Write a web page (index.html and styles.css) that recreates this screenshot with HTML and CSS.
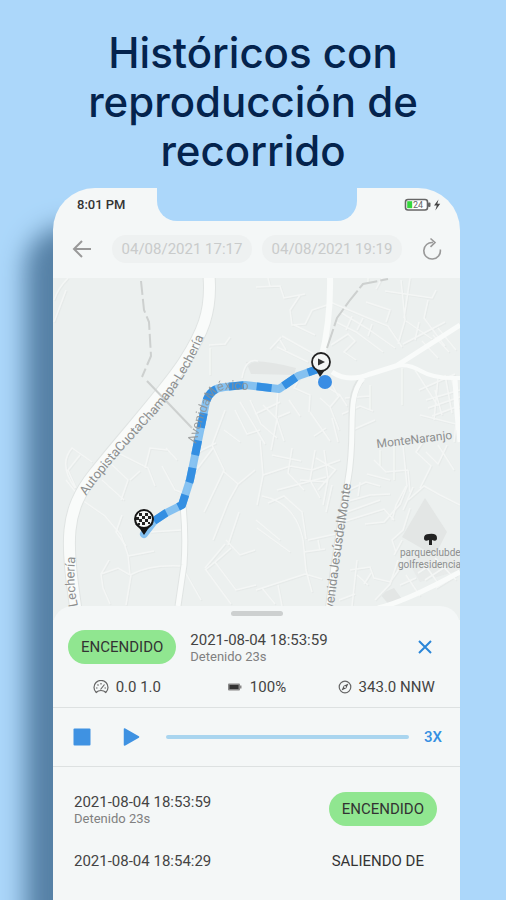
FILE: index.html
```html
<!DOCTYPE html>
<html lang="es">

<head>
    <meta charset="UTF-8">
    <meta name="viewport" content="width=device-width, initial-scale=1.0">
    <title>Históricos con reproducción de recorrido</title>
    <link rel="stylesheet" href="styles.css">
</head>

<body>

    <h1>Históricos con<br>reproducción de<br>recorrido</h1>

    <main class="phone">
        <div class="status-bar">
            <span class="time">8:01 PM</span>
            <div class="notch"></div>
            <div class="battery">
                <svg width="38" height="14" viewBox="0 0 38 14" role="img" aria-label="24%">
                    <rect x="1.5" y="1.5" width="22" height="10.5" rx="2.5" fill="#fff" stroke="#666" stroke-width="1.6" />
                    <rect x="24" y="4.5" width="2.5" height="4.5" rx="1" fill="#666" />
                    <rect x="3.2" y="3.2" width="5" height="7" fill="#35d63c" />
                    <text x="9" y="10" class="battery-text">24</text>
                    <path d="M34.500 1.500 L30 7.500 H32.800 L31.300 12.500 L36.200 5.800 H33.300 Z" fill="#444" />
                </svg>
            </div>
        </div>

        <header class="toolbar">
            <button class="icon-btn" aria-label="Regresar">
                <svg width="20" height="20" viewBox="0 0 20 20" fill="none" stroke="#999" stroke-width="2">
                    <path d="M19 10H2.500M10 2L2 10l8 8" />
                </svg>
            </button>
            <div class="dates">
                <button class="date">04/08/2021 17:17</button>
                <button class="date">04/08/2021 19:19</button>
            </div>
            <button class="icon-btn" aria-label="Actualizar">
                <svg width="20" height="24" viewBox="0 0 20 24" fill="none" stroke="#999" stroke-width="1.600">
                    <path d="M11 5.500A8.300 8.300 0 1 0 18.300 12.500M8.500 1.500l4.500 4-4.500 4.300" />
                </svg>
            </button>
        </header>

        <div class="map">
            <svg viewBox="53 278 407 342" preserveAspectRatio="xMidYMin slice">
                <defs>
                    <path id="autopista" d="M86 496C104 470 128 444 152 418S194 364 208 326" />
                    <path id="lecheria" d="M78 606C74 588 73 570 77 546" />
                    <path id="avenida" d="M196 444C201 425 207 405 214 396S228 390 262 390" />
                    <path id="jesus" d="M333 618C337 570 345 530 353 470" />
                    <path id="naranjo" d="M377 448L460 438" />
                </defs>

                <!-- green areas -->
                <g fill="#e3e6e5">
                    <path d="M425 498L447 532 435 556 402 537Z" />
                    <path d="M246 362Q262 359 296 368L294 375 251 374Z" />
                    <path d="M380 594L394 588 404 602 390 606Z" />
                    <path d="M405 556L460 553V570L420 582Z" opacity=".5" />
                </g>

                <!-- small streets -->
                <g class="streets">
                    <path d="M54 300Q58 288 68 278M54 322L66 290M80 455L68 470 76 488M66 480L82 500 105 516 121 535 128 555 130 575M75 488Q58 464 72 448L92 462" />
                    <path d="M130 575L118 568 101 574 103 588 110 604M130 575Q150 564 182 566M128 556L154 551M131 575L126 605M101 574L109 560M150 532L181 530M122 515L116 532 126 546" />
                    <path d="M209 345L225 344 230 337M210 348V375M242 378Q245 358 258 361M225 410L212 445 224 470 204 512M213 448L190 478M224 430L240 442M216 443L198 452" />
                    <path d="M235 410L247 434 260 430M250 400L261 424 277 438M240 402L265 444M263 405L277 419 271 450M223 471L238 484 228 502 213 540M238 484L255 470" />
                    <path d="M110 463L128 480 121 500M118 453L148 468 155 486M130 480L140 471M102 480L124 500M145 468L150 448 167 450M162 466L175 490 188 495M166 448L177 460" />
                    <path d="M205 570L215 562 236 590 256 585M226 540L240 555 255 550M206 570L231 604M225 544L205 568M215 562L231 548M239 512L228 545M184 570L201 600" />
                    <path d="M270 286L268 278M256 287L280 286 284 298 305 294M300 295L290 310 292 325 305 324 312 310 327 305M294 325L315 335M281 337L270 349M277 347L308 362M282 336L314 354M286 350L280 340" />
                    <path d="M330 302L368 318 388 326 402 347M340 312L368 329 395 348M352 316L346 330M363 318L357 330M372 324L368 336M336 322L356 332 383 352M331 345L348 334 355 341 344 352 356 360M366 302L390 310 386 322M401 280L405 320 398 344M368 282V278M410 278L404 318" />
                    <path d="M385 291L432 298 436 290M376 289L382 278M428 300L424 318 445 346M406 321L432 339M419 322L415 340M422 341L438 358M433 335L449 352M438 328L456 350M403 344L445 322" />
                    <path d="M402 368V405M415 370L438 406M438 378L434 420M426 400L460 390M428 408L460 397M432 416L456 407M419 390L455 374M445 375L452 413M451 376L459 408M435 390L442 415M420 415L456 424 454 442" />
                    <path d="M300 377L294 388 310 395 309 412M316 380L340 395 347 406M340 395L330 407 339 430M330 407L320 398M338 396L332 384M342 414L360 406 373 411M345 398L370 396M370 385V410" />
                    <path d="M278 388L276 417 284 441M278 417L290 412M280 402L255 414M332 418L338 442M326 428L314 436M310 412L330 441M289 400L300 416M352 430L375 420" />
                    <path d="M260 440L263 475 257 505M263 475L290 466 312 470 340 460M272 455L301 461M292 448L288 473 304 490M315 450L310 480 320 498M277 490L326 477M268 503L284 496 302 512 306 539M262 496Q296 503 303 540" />
                    <path d="M324 450L328 478 323 505M316 458L336 470M332 485L326 512M300 480L328 482M335 470L318 490M348 490L366 482 380 486M345 502L370 495 390 494M344 513L380 500M342 522L384 509 394 520M360 482L358 496" />
                    <path d="M374 460L386 472 408 470M367 474L390 480M394 446V480M403 446L407 486 400 504 384 522 365 524M408 470L410 492M424 440L416 452 431 466 420 488M408 500L424 486 440 495 460 505M447 445L438 464 426 452M380 450V466" />
                    <path d="M406 486L396 505 392 520M413 487L403 510M410 508L403 530 392 540 396 552M402 540L394 555M438 445L454 470" />
                    <path d="M256 520L280 540M257 528L290 552M303 540L306 570 312 592M308 540L340 533M304 552L325 549M256 590L305 574 322 579M318 540L320 550M350 570L370 567 374 578 390 582 402 565M357 560L352 606M357 575L368 585" />
                    <path d="M371 573L364 584M375 600L390 584 398 560M406 575L420 596M423 562L440 586M435 558L456 580M418 573L438 560M425 580L448 565M436 588L457 575M400 585L416 578M339 600L355 594M278 585L282 606M262 588L275 604" />
                </g>

                <!-- main roads -->
                <g class="road-edge">
                    <path d="M209 276C212 312 202 334 184 362S124 436 94 474 66 540 76 610" stroke-width="13" />
                    <path d="M183 505Q186 535 184 565L178 606" stroke-width="7" />
                    <path d="M361 380C345 400 357 430 348 480S334 560 328 612" stroke-width="7" />
                </g>
                <g class="road">
                    <path d="M209 276C212 312 202 334 184 362S124 436 94 474 66 540 76 610" stroke-width="11" />
                    <path d="M330 276Q331 320 321 360" stroke-width="6" />
                    <path d="M332 372Q348 383 370 374L396 366 460 325" stroke-width="5" />
                    <path d="M396 366Q408 363 421 371T460 378" stroke-width="4" />
                    <path d="M363 378C345 400 357 430 348 480S334 560 328 612" stroke-width="5" />
                    <path d="M183 505Q186 535 184 565L178 606" stroke-width="5" />
                    <path d="M208 400L183 505" stroke-width="4" />
                    <path d="M378 608Q405 602 460 572M455 378Q457 420 460 442" stroke-width="5" />
                </g>
                <g class="boundary">
                    <path d="M141 281L144 310 149 322 151 356 142 377" stroke-dasharray="14 4" />
                    <path d="M147 381L192 428" />
                    <path d="M327 348L337 318 350 300 363 284 388 279" stroke-dasharray="20 3" />
                </g>

                <g class="map-text">
                    <text><textPath href="#autopista">AutopistaCuotaChamapa-Lechería</textPath></text>
                    <text><textPath href="#lecheria">Lechería</textPath></text>
                    <text><textPath href="#jesus">AvenidaJesúsdelMonte</textPath></text>
                    <text class="town"><textPath href="#naranjo">MonteNaranjo</textPath></text>
                    <text class="park" x="400" y="556">parqueclubde</text>
                    <text class="park" x="398" y="568">golfresidencia</text>
                </g>
                <path d="M429 540q-5 2-5-2 0-4 5-4 8-1 8 4 0 4-5 2v5h-3z" fill="#222" />

                <!-- travelled route -->
                <g class="route">
                    <path class="route-base" d="M144 534L154 521 166 513 182 505 190 480 206 402Q210 388 225 387L245 385 279 389 298 376 318 369" />
                    <path class="route-dash" d="M154 521L166 513 182 505 190 480 206 402Q210 388 225 387L245 385 279 389 298 376 318 369" />
                </g>
                <text class="map-text street-name"><textPath href="#avenida">AvenidaMéxico</textPath></text>
                <circle cx="325" cy="382" r="7" fill="#3a8de4" />

                <!-- start and finish markers -->
                <path d="M316 370L320 377 325 370Z" fill="#222" />
                <circle cx="321" cy="362" r="9" fill="#f5f7f6" stroke="#222" stroke-width="1.800" />
                <path d="M318 358.500V365.500L325 362Z" fill="#333" />
                <path d="M135 524Q141 529 144 535 147 529 153 524Z" fill="#151515" />
                <circle cx="144" cy="519" r="9" fill="#f5f7f6" stroke="#151515" stroke-width="2" />
                <path d="M139 513h3v3h-3zM145 513h3v3h-3zM142 516h3v3h-3zM148 516h3v3h-3zM136 517h3v3h-3zM139 519h3v3h-3zM145 519h3v3h-3zM142 522h3v3h-3zM148 522h2v2h-2zM138 523h2v2h-2z" fill="#222" />
            </svg>
        </div>

        <section class="sheet">
            <div class="handle"></div>

            <div class="current">
                <span class="badge">ENCENDIDO</span>
                <div class="stamp">
                    <p class="when">2021-08-04 18:53:59</p>
                    <p class="note">Detenido 23s</p>
                </div>
                <button class="icon-btn close" aria-label="Cerrar">
                    <svg width="14" height="14" viewBox="0 0 14 14" fill="none" stroke="#2a86d8" stroke-width="2">
                        <path d="M1 1l12 12M13 1L1 13" />
                    </svg>
                </button>
            </div>

            <div class="stats">
                <div class="stat">
                    <svg width="16" height="14" viewBox="0 0 16 14" fill="none" stroke="#666" stroke-width="1.200">
                        <path d="M3.200 12.500A7 7 0 1 1 12.800 12.500Q11 10.500 8 10.500T3.200 12.500Z" />
                        <path d="M7.500 9.500L11.500 4.500M3 8h1.500M4.500 4.500l1 1M8 3v1.500M11.500 8H13" />
                    </svg>
                    <span>0.0 1.0</span>
                </div>
                <div class="stat">
                    <svg width="16" height="14" viewBox="0 0 16 14">
                        <rect x="1" y="3.500" width="12" height="7" rx="1" fill="#888" />
                        <rect x="2.500" y="5" width="9" height="4" fill="#333" />
                        <rect x="13" y="5.500" width="1.500" height="3" fill="#888" />
                    </svg>
                    <span>100%</span>
                </div>
                <div class="stat">
                    <svg width="14" height="14" viewBox="0 0 14 14">
                        <circle cx="7" cy="7" r="5.800" fill="none" stroke="#666" stroke-width="1.200" />
                        <path d="M10.500 3.500L8.300 8.300 3.500 10.500 5.700 5.700Z" fill="#555" />
                        <circle cx="7" cy="7" r="1" fill="#f4f7f7" />
                    </svg>
                    <span>343.0 NNW</span>
                </div>
            </div>

            <div class="player">
                <button class="icon-btn" aria-label="Detener">
                    <svg width="18" height="18" viewBox="0 0 18 18">
                        <rect x=".5" y=".5" width="17" height="17" rx="1" fill="#3f92e2" />
                    </svg>
                </button>
                <button class="icon-btn play" aria-label="Reproducir">
                    <svg width="17" height="18" viewBox="0 0 17 18">
                        <path d="M1.500 1L15.500 9 1.500 17Z" fill="#3f92e2" stroke="#3f92e2" stroke-width="1.500" stroke-linejoin="round" />
                    </svg>
                </button>
                <input type="range" min="0" max="100" value="0" aria-label="Avance del recorrido">
                <button class="speed">3X</button>
            </div>

            <ul class="events">
                <li>
                    <div class="stamp">
                        <p class="when">2021-08-04 18:53:59</p>
                        <p class="note">Detenido 23s</p>
                    </div>
                    <span class="badge">ENCENDIDO</span>
                </li>
                <li>
                    <p class="when">2021-08-04 18:54:29</p>
                    <span class="badge plain">SALIENDO DE</span>
                </li>
            </ul>
        </section>
    </main>

</body>

</html>
```

FILE: styles.css
```css
* {
    box-sizing: border-box;
}

body {
    display: flex;
    flex-direction: column;
    min-height: 100vh;
    margin: 0;
    overflow: hidden;
    background-color: #acd7fa;
    color: #444;
    font-family: Roboto, "Liberation Sans", sans-serif;
    font-size: 15px;
}

h1 {
    margin: 28px 0 13px;
    color: #04234d;
    font-family: Inter, "Open Sans", sans-serif;
    font-size: 42px;
    font-weight: 500;
    line-height: 49px;
    text-align: center;
}

p {
    margin: 0;
}

button {
    padding: 0;
    border: none;
    background: none;
    font-family: inherit;
    font-size: 15px;
    cursor: pointer;
}

svg {
    display: block;
}

.phone {
    flex: 1;
    margin: 0 46px 0 53px;
    background-color: #f4f7f7;
    border-radius: 42px 42px 0 0;
    box-shadow: -28px 38px 24px #5681a6;
}

.status-bar {
    display: grid;
    grid-template-columns: 1fr 200px 1fr;
    height: 32px;
}

.time {
    padding-left: 24px;
    color: #333;
    font-size: 13px;
    font-weight: 500;
    line-height: 33px;
}

.notch {
    background-color: #acd7fa;
    border-radius: 0 0 20px 20px;
}

.battery {
    display: flex;
    align-items: center;
    justify-content: flex-end;
    padding-right: 18px;
}

.battery-text {
    fill: #666;
    font-size: 9px;
}

.toolbar {
    display: flex;
    align-items: center;
    justify-content: space-between;
    height: 58px;
    padding: 0 18px 0 19px;
}

.dates {
    display: flex;
    gap: 10px;
}

.date {
    width: 140px;
    height: 28px;
    border-radius: 14px;
    background-color: #eef1f1;
    color: #c9cbcb;
}

.map {
    height: 342px;
    background-color: #ecf0ef;
}

.map svg {
    width: 100%;
    height: 100%;
}

.streets {
    fill: none;
    stroke: #f4f6f5;
    stroke-width: 1.5;
    filter: drop-shadow(1px 1px 0 #e6eae9);
}

.road,
.road-edge {
    fill: none;
    stroke: #f9fbfa;
}

.road-edge {
    stroke: #e0e4e3;
}

.boundary {
    fill: none;
    stroke: #cdd0cf;
    stroke-width: 2;
}

.map-text {
    fill: #8d8f8f;
    font-size: 13px;
}

.town {
    font-size: 12px;
}

.street-name {
    opacity: 0.8;
}

.park {
    font-size: 10px;
}

.route {
    fill: none;
    stroke-width: 8;
    stroke-linejoin: round;
}

.route-base {
    stroke: #6bb5f0;
    stroke-linecap: round;
    opacity: 0.8;
}

.route-dash {
    stroke: #348fe2;
    stroke-dasharray: 15 13;
}

.sheet {
    position: relative;
    margin-top: -14px;
    padding-top: 5px;
    background-color: #f4f7f7;
    border-radius: 20px 20px 0 0;
}

.handle {
    width: 52px;
    height: 5px;
    margin: 0 auto;
    border-radius: 3px;
    background-color: #cdd0d0;
}

.current {
    display: flex;
    align-items: center;
    gap: 14px;
    padding: 14px 28px 8px 15px;
}

.badge {
    padding: 0 13px;
    border-radius: 17px;
    background-color: #90e690;
    color: #333;
    line-height: 34px;
}

.plain {
    background: none;
}

.when {
    line-height: 20px;
}

.note {
    color: #808080;
    font-size: 13px;
    line-height: 14px;
}

.close {
    margin-left: auto;
}

.stats {
    display: grid;
    grid-template-columns: repeat(3, 1fr);
    padding: 0 9px 5px;
    line-height: 30px;
}

.stat {
    display: flex;
    align-items: center;
    justify-content: center;
    gap: 7px;
}

.player {
    display: flex;
    align-items: center;
    height: 60px;
    padding: 0 18px 0 20px;
    border: solid #dde1e1;
    border-width: 1px 0;
}

.play {
    margin: 0 26px 0 32px;
}

.player input {
    flex: 1;
    min-width: 0;
    height: 4px;
    margin: 0 15px 0 0;
    appearance: none;
    border-radius: 2px;
    background-color: #a9d5ef;
}

.player input::-webkit-slider-thumb {
    appearance: none;
    width: 0;
    height: 0;
}

.speed {
    color: #348fe2;
    font-weight: 500;
}

.events {
    margin: 0;
    padding: 16px 23px 0 21px;
    list-style: none;
}

.events li {
    display: flex;
    align-items: center;
    justify-content: space-between;
    min-height: 52px;
}
```
